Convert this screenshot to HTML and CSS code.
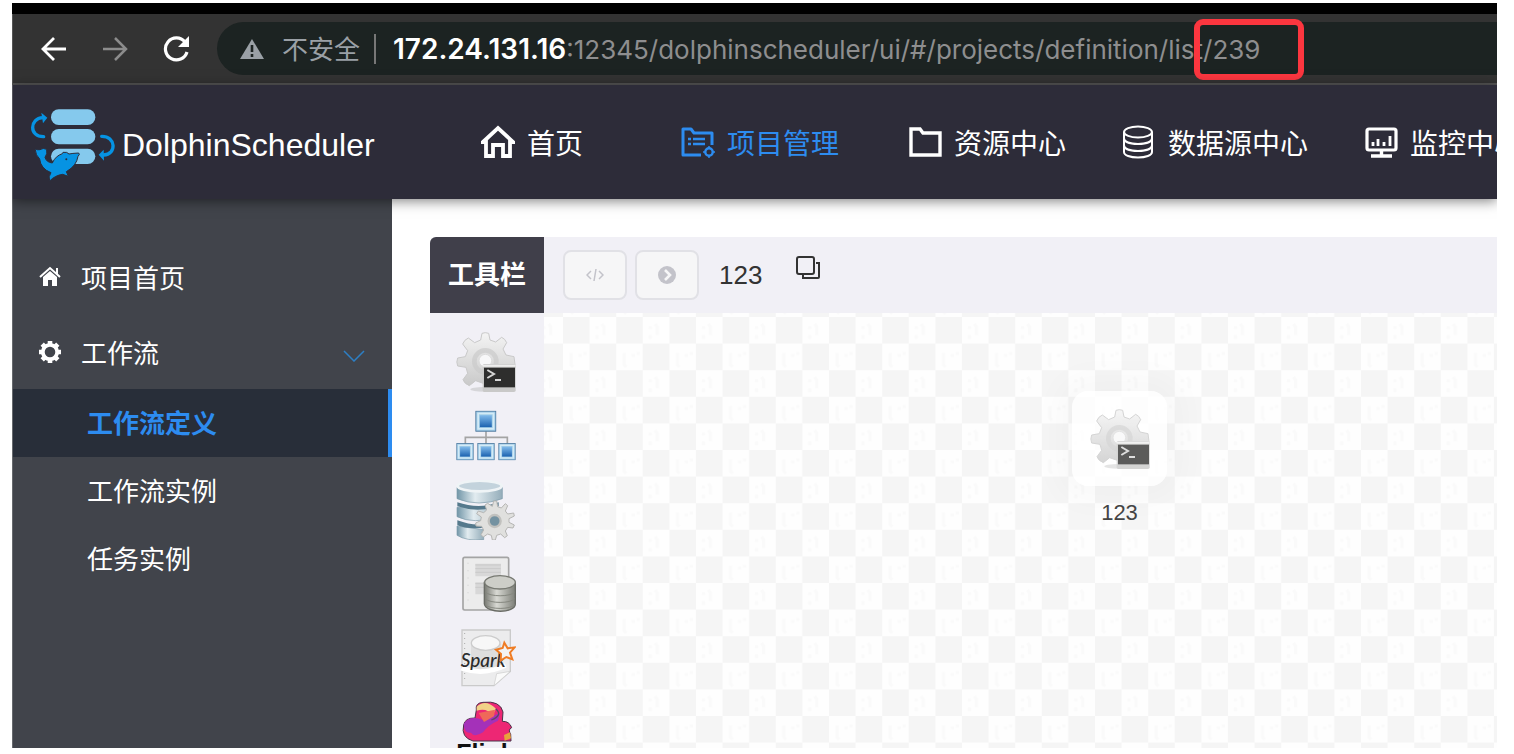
FILE: index.html
```html
<!DOCTYPE html>
<html lang="zh-CN">
<head>
<meta charset="utf-8">
<title>DolphinScheduler</title>
<link rel="stylesheet" href="styles.css">
</head>
<body>
<svg class="defs" aria-hidden="true">
  <defs>
    <linearGradient id="steel" x1="0" y1="0" x2="0" y2="1"><stop offset="0" stop-color="#f4f4f4"/><stop offset="1" stop-color="#c9c9c9"/></linearGradient>
    <linearGradient id="blue" x1="0" y1="0" x2="0" y2="1"><stop offset="0" stop-color="#7fb9ea"/><stop offset="1" stop-color="#1c62b0"/></linearGradient>
    <linearGradient id="disk" x1="0" y1="0" x2="1" y2="0"><stop offset="0" stop-color="#7296a8"/><stop offset=".4" stop-color="#e2ecf0"/><stop offset="1" stop-color="#94adba"/></linearGradient>
    <linearGradient id="can" x1="0" y1="0" x2="1" y2="0"><stop offset="0" stop-color="#777972"/><stop offset=".4" stop-color="#d8d9d3"/><stop offset="1" stop-color="#7d7f78"/></linearGradient>
    <symbol id="shell" viewBox="0 0 180 180">
      <ellipse cx="85" cy="172" rx="42" ry="7" fill="#bbb" opacity=".5"/>
      <path d="M74 24 78 4Q88 0 98 4L102 24 119 30 137 16Q147 20 152 32L141 51 150 69 174 74 178 105 150 112 141 130 100 160 76 152 59 146 40 161Q25 155 21 143L35 124 30 106 5 102Q0 90 5 78L28 74 35 56 20 36Q25 23 37 18L56 32Z" fill="url(#steel)" stroke="#c9c9c9" stroke-width="3"/>
      <circle cx="88" cy="88" r="33" fill="none" stroke="#cacaca" stroke-width="14" opacity=".7"/>
      <circle cx="88" cy="86" r="19" fill="#f8f8f9" stroke="#dcdcdc" stroke-width="3"/>
      <rect x="80" y="96" width="99" height="84" rx="5" fill="#c9c9c8"/>
      <path d="M80 101h99" stroke="#eee" stroke-width="6"/>
      <rect x="84" y="107" width="93" height="59" fill="#2e2e2d"/>
      <path d="m94 114 20 12-20 12M117 144h18" fill="none" stroke="#d6d6d6" stroke-width="6"/>
    </symbol>
    <symbol id="square" viewBox="0 0 60 60">
      <rect x="1" y="1" width="58" height="58" fill="#9fcbe6" stroke="#426e96" stroke-width="3"/>
      <rect x="8" y="8" width="44" height="44" fill="none" stroke="#d3eaf6" stroke-width="5"/>
      <rect x="13" y="13" width="34" height="34" fill="url(#blue)"/>
    </symbol>
  </defs>
</svg>
<div class="window">
  <div class="titlebar"></div>
  <div class="browser">
    <button class="chrome-btn" aria-label="后退"><svg viewBox="0 0 26 26"><path d="M25 13H2M13 2 2 13l11 11" fill="none" stroke="#fff" stroke-width="2.800"/></svg></button>
    <button class="chrome-btn" aria-label="前进"><svg viewBox="0 0 26 26"><path d="M1 13h23M13 2l11 11-11 11" fill="none" stroke="#8c8c8c" stroke-width="2.500"/></svg></button>
    <button class="chrome-btn" aria-label="重新加载"><svg viewBox="0 0 26 26"><path d="M22 6A11 11 0 1 0 24 16" fill="none" stroke="#fff" stroke-width="3.200"/><path d="M26 0v11H15z" fill="#fff"/></svg></button>
    <div class="address">
      <svg class="warn" viewBox="0 0 24 22"><path d="M12 1 24 21H0z" fill="#9aa0a6"/><path d="M12 7v7M12 16v3" stroke="#1c2322" stroke-width="2.600"/></svg>
      <span class="insecure">不安全</span>
      <span class="bar"></span>
      <span class="url"><b>172.24.131.16</b>:12345/dolphinscheduler/ui/#/projects/definition/list<span class="code">/239</span></span>
    </div>
  </div>
  <header class="nav">
    <a class="brand" href="#">
      <svg class="logo" viewBox="90 321 258 225">
        <g fill="#85c9ed"><rect x="153" y="328" width="133" height="47" rx="23"/><rect x="153" y="387" width="133" height="46" rx="23"/><rect x="153" y="446" width="133" height="46" rx="23"/></g>
        <g fill="none" stroke="#0693e3" stroke-width="10" stroke-linecap="round"><path d="M131 410C86 411 89 354 128 353"/><path d="M305 409C348 408 351 464 311 465"/></g>
        <path d="m124 338 18 15-13 17zM311 449l-15 15 16 18z" fill="#0693e3"/>
        <path d="M105 446q8 5 15 3 10-7 20-1 3 14-5 24 4 15 22 17 9-21 30-28l2-4q13-2 18 5 9-2 29-3 5 4-2 10-4 28-35 46l6 14-17-6q-23 3-39 20-5-13 4-25-31-12-34-41-12-10-14-31z" fill="#0693e3" stroke="#2d2c39" stroke-width="3"/>
        <circle cx="199" cy="478" r="3" fill="#2d2c39"/>
      </svg>
      <span>DolphinScheduler</span>
    </a>
    <nav class="menu">
      <a class="item home" href="#"><svg viewBox="0 0 34 34"><path d="M2 17 17 3l15 14h-3v14h-7V20H12v11H5V17z" fill="none" stroke="#fff" stroke-width="3.800"/></svg>首页</a>
      <a class="item project" href="#"><svg viewBox="0 0 34 34"><path d="M20 30H2V4h8l3 4h18v12" fill="none" stroke="#2d8cf0" stroke-width="3" stroke-linejoin="round"/><path d="M7 14h3m2 0h12M7 19h3m2 0h12" stroke="#2d8cf0" stroke-width="2.600"/><circle cx="28" cy="27" r="3.700" fill="none" stroke="#2d8cf0" stroke-width="2.400"/><path d="M28 21v3m0 6v3M22 27h2m8 0h2" stroke="#2d8cf0" stroke-width="1.500"/></svg>项目管理</a>
      <a class="item" href="#"><svg viewBox="0 0 34 34"><path d="M3 30V4h9l3 4h17v22z" fill="none" stroke="#fff" stroke-width="3.400"/></svg>资源中心</a>
      <a class="item" href="#"><svg viewBox="0 0 34 34"><g fill="none" stroke="#fff" stroke-width="2"><ellipse cx="16" cy="7" rx="14" ry="5.500"/><path d="M2 7v20c0 3.500 6.300 5.500 14 5.500s14-2 14-5.500V7M2 13c0 4 6.300 6 14 6s14-2 14-6M2 20c0 4 6.300 6 14 6s14-2 14-6"/></g></svg>数据源中心</a>
      <a class="item" href="#"><svg viewBox="0 0 34 34"><rect x="3" y="4" width="29" height="21" rx="2" fill="none" stroke="#fff" stroke-width="3.200"/><path d="M9 21v-4m5 4v-7m6 7v-4m6 4V11" stroke="#fff" stroke-width="2.800"/><path d="M17.500 25v5M7 31h21" stroke="#fff" stroke-width="3.400"/></svg>监控中心</a>
    </nav>
  </header>
  <div class="body">
    <aside class="side">
      <a class="row" href="#"><svg class="row-icon" viewBox="0 0 22 22"><path d="M4 11v9h5v-6h4v6h5v-9l-7-6z" fill="#fff"/><path d="m1 11 10-9 10 9M18 2v6" fill="none" stroke="#fff" stroke-width="2"/></svg>项目首页</a>
      <a class="row" href="#"><svg class="row-icon" viewBox="0 0 22 22"><circle cx="11" cy="11" r="7.200" fill="none" stroke="#fff" stroke-width="3.800"/><path d="M11 0v4m0 14v4M0 11h4m14 0h4M3.200 3.200 6 6m10 10 2.800 2.800m0-15.600L16 6M6 16l-2.800 2.800" stroke="#fff" stroke-width="4.600"/></svg>工作流<svg class="chevron" viewBox="0 0 22 12"><path d="m1 1 10 10L21 1" fill="none" stroke="#2d7fc4" stroke-width="1.500"/></svg></a>
      <a class="sub active" href="#">工作流定义</a>
      <a class="sub" href="#">工作流实例</a>
      <a class="sub" href="#">任务实例</a>
    </aside>
    <main class="main">
      <section class="dag">
        <div class="toolbar">
          <h2 class="tool-title">工具栏</h2>
          <button class="op" aria-label="查看变量"><svg viewBox="0 0 18 14"><path d="M5 3 1 7l4 4M13 3l4 4-4 4M10 1 8 13" fill="none" stroke="#c3c3ca" stroke-width="1.500"/></svg></button>
          <button class="op" aria-label="运行"><svg viewBox="0 0 18 18"><circle cx="9" cy="9" r="9" fill="#c3c3ca"/><path d="m7 4 5 5-5 5" fill="none" stroke="#f6f6f7" stroke-width="2.600"/></svg></button>
          <span class="dag-name">123</span>
          <button class="copy" aria-label="复制名称"><svg viewBox="0 0 24 24"><rect x="1" y="1" width="17" height="17" rx="2" fill="none" stroke="#333" stroke-width="2"/><path d="M20 7h3v14q0 1-1 1H7v-3" fill="none" stroke="#333" stroke-width="2"/></svg></button>
        </div>
        <div class="work">
          <div class="tools">
            <svg class="tool"><use href="#shell"/></svg>
            <svg class="tool" viewBox="0 0 180 180"><path d="M90 76v42M28 118V94h126v24" fill="none" stroke="#a4a4a4" stroke-width="5"/><use href="#square" x="58" y="14" width="63" height="63"/><use href="#square" x="1" y="111" width="52" height="52"/><use href="#square" x="64" y="111" width="52" height="52"/><use href="#square" x="127" y="111" width="52" height="52"/></svg>
            <svg class="tool" viewBox="0 0 180 180">
              <g fill="url(#disk)" stroke="#7c9aa9" stroke-width="2"><path d="M3 138v28q30 18 80 13v-30z"/><path d="M3 82v28q50 24 125 0V82z"/><path d="M3 22v34q65 26 136 0V22z"/></g>
              <path d="M4 67q65 22 124 0v12q-64 20-124 0zM4 121q55 20 90 8v12q-55 9-90-5z" fill="#55798c"/>
              <ellipse cx="71" cy="18" rx="66" ry="16" fill="#c3d3dc" stroke="#eff4f6" stroke-width="8"/>
              <path d="m109 79 4-16h9l3 17 11 4 12-13 7 6-7 16 7 9 18-3 2 9-16 8v11l16 8-4 9-16-2-7 11 6 14-8 6-12-11-12 4-4 14h-9l-3-14-11-4-13 9-7-7 8-14-6-11-17-1-1-9 15-7 2-11-14-10 5-8 16 5 9-8-5-15 8-5z" fill="#e0e0de" stroke="#b5b5b3" stroke-width="3"/>
              <circle cx="116" cy="123" r="18" fill="#7492a1" stroke="#c1c1be" stroke-width="7"/>
            </svg>
            <svg class="tool" viewBox="0 0 180 180"><rect x="21" y="10" width="137" height="158" rx="5" fill="#ececec" stroke="#a4a4a4" stroke-width="5"/><path d="M58 29h77v38H58zM58 85h77v36H58z" fill="#d8d8d8"/><path d="M58 33h76M58 44h76M58 55h76M58 89h76M58 100h76" stroke="#c9c9c9" stroke-width="3"/><path d="M36 26v128" stroke="#ccc" stroke-width="2" stroke-dasharray="4 18"/><path d="M85 85v65c5 29 93 29 93 0V85z" fill="url(#can)" stroke="#696b65" stroke-width="4"/><path d="M88 114c12 15 77 15 88 0M88 134c12 15 77 15 88 0M88 152c12 15 77 15 88 0" fill="none" stroke="#85877f" stroke-width="3"/><ellipse cx="132" cy="85" rx="46" ry="20" fill="#cdcec8" stroke="#777972" stroke-width="4"/></svg>
            <svg class="tool" viewBox="0 0 180 180"><path d="M18 6h145v124l-49 43H18z" fill="#ececed" stroke="#cacaca" stroke-width="4"/><path d="m163 130-49 43 8-36z" fill="#fafafa" stroke="#ccc" stroke-width="2"/><path d="M26 15v145" stroke="#aaa" stroke-width="3" stroke-dasharray="3 12"/><path d="M45 48v75q44 25 90 0V48z" fill="#dedede"/><ellipse cx="89" cy="45" rx="43" ry="22" fill="#f7f7f7" stroke="#ccc" stroke-width="4"/><path d="M16 121q68 23 133-9" fill="none" stroke="#fff" stroke-width="14"/><text class="spark" x="14" y="116">Spark</text><path d="m145 44 10 17 21-3-14 16 7 20-18-7-17 11 1-20-15-13 20-5z" fill="#f3f3f3" stroke="#ef7c24" stroke-width="6"/></svg>
            <svg class="tool flink-icon" viewBox="0 0 180 180"><path d="M61 24q-4-21 20-23 52-6 60 29l-2 28q21-1 28 19-12 5-3 20l1 20H51q-37-11-28-48 4-22 34-21z" fill="#ed2774" stroke="#493349" stroke-width="3"/><path d="M23 66q16-27 57-13l52-20-6 23q-30 13-45 35-26 17-36 1-20 4-22-26z" fill="#a431b9"/><path d="M62 14q27-25 58 6l-10 20q-16-23-48-14z" fill="#f1d287"/><path d="m68 33 49-10-3 20-30 17z" fill="#ef6859"/><path d="M119 20q23 19-13 34" fill="none" stroke="#5b4764" stroke-width="4"/><path d="m144 99 18-8 3 18-19 7z" fill="#e7a33b"/><text class="flink" x="1" y="180">Flink</text></svg>
          </div>
          <div class="canvas">
            <svg class="grid" aria-hidden="true"><defs><pattern id="checks" x="19" y="4" width="53.200" height="53.200" patternUnits="userSpaceOnUse"><rect width="53.200" height="53.200" fill="#fefefe"/><path d="M0 0h26.600v26.600H0zM26.600 26.600h26.600v26.600H26.600z" fill="#f5f5f5"/><path d="M34 9v3m0 6v4M39 7l2 3v8M8 36v12l2 2M17 37v3m5-5v3" fill="none" stroke="#fafafa" stroke-width="3"/></pattern></defs><rect width="100%" height="100%" fill="url(#checks)"/></svg>
            <div class="node"><div class="card"><svg class="node-icon"><use href="#shell"/></svg></div><span>123</span></div>
          </div>
        </div>
      </section>
    </main>
  </div>
</div>
</body>
</html>
```
FILE: styles.css
```css
* { box-sizing: border-box; }
body {
  margin: 0;
  padding: 3px 17px 6px 12px;
  background: #fff;
  font-family: "Liberation Sans", "Noto Sans CJK SC", sans-serif;
}
a { color: inherit; text-decoration: none; }
button { padding: 0; border: 0; background: none; }
svg { display: block; flex: none; }
.defs { position: absolute; width: 0; height: 0; }
.window {
  display: flex;
  flex-direction: column;
  height: calc(100vh - 9px);
  overflow: hidden;
}
.titlebar { flex: none; height: 11px; background: #000; }
.browser {
  display: flex;
  flex: none;
  align-items: center;
  height: 71px;
  padding-left: 28px;
  background: #333;
  border-left: 1px solid #555;
  border-bottom: 2px solid #555;
}
.chrome-btn { flex: none; width: 26px; height: 26px; margin-right: 35px; }
.chrome-btn svg { width: 26px; height: 26px; }
.chrome-btn:nth-child(3) { margin-right: 28px; }
.address {
  display: flex;
  flex: 1;
  align-items: center;
  height: 53px;
  min-width: 0;
  padding-left: 23px;
  border-radius: 27px 0 0 27px;
  background: #1c2322;
  color: #8e8e8f;
  white-space: nowrap;
}
.warn { width: 24px; height: 22px; margin-right: 18px; }
.insecure { padding-bottom: 2px; font-size: 26px; color: #9aa0a6; }
.bar { width: 2px; height: 30px; margin: 0 17px 0 14px; background: #777; }
.url { font-family: Inter, sans-serif; font-size: 26px; }
.url b { color: #fff; font-size: 28px; font-weight: 600; }
.code { position: relative; }
.code::after {
  content: "";
  position: absolute;
  inset: -15px -44px -15px -9px;
  border: 6px solid #fc363f;
  border-radius: 9px;
}
.nav {
  display: flex;
  position: relative;
  z-index: 1;
  flex: none;
  align-items: center;
  height: 114px;
  padding-left: 17px;
  border-left: 1px solid #55555c;
  background: #2d2c39;
  color: #fff;
  box-shadow: 0 2px 12px rgba(0, 0, 0, .5);
}
.brand { display: flex; flex: none; align-items: center; gap: 6px; width: 451px; padding-top: 5px; font-size: 32px; }
.brand span { padding-top: 2px; }
.logo { width: 86px; height: 75px; }
.menu { display: flex; flex: none; gap: 56px; }
.item { display: flex; flex: none; align-items: center; gap: 12px; font-size: 28px; }
.item svg { width: 34px; height: 34px; }
.home { min-width: 144px; }
.project { min-width: 171px; color: #2d8cf0; }
.body { display: flex; flex: 1; min-height: 0; }
.side {
  flex: none;
  width: 380px;
  padding-top: 40px;
  border-left: 1px solid #66696d;
  background: #41444b;
  color: #fff;
  font-size: 26px;
}
.row { display: flex; align-items: center; height: 75px; padding: 0 27px 0 26px; }
.row-icon { width: 22px; height: 22px; margin-right: 20px; }
.chevron { width: 22px; height: 12px; margin: 8px 0 0 auto; }
.sub { display: flex; align-items: center; height: 68px; padding: 0 0 3px 74px; }
.active { border-right: 4px solid #2d8cf0; background: #282e39; color: #2d8cf0; font-weight: 600; }
.main { display: flex; flex: 1; min-width: 0; padding: 38px 0 0 38px; background: #fff; }
.dag {
  display: flex;
  flex: 1;
  flex-direction: column;
  min-width: 0;
  overflow: hidden;
  border-radius: 6px 0 0 0;
  background: #f1f0f6;
}
.toolbar { display: flex; flex: none; align-items: center; height: 76px; color: #333; }
.tool-title {
  width: 114px;
  height: 76px;
  margin: 0 19px 0 0;
  background: #403f4a;
  color: #fff;
  font-size: 26px;
  font-weight: 600;
  line-height: 76px;
  text-align: center;
}
.op {
  display: grid;
  place-items: center;
  width: 64px;
  height: 50px;
  margin-right: 8px;
  border: 2px solid #e1e1e6;
  border-radius: 8px;
  background: #f6f6f7;
}
.op svg { width: 18px; height: 18px; }
.dag-name { margin: 0 34px 0 12px; font-size: 26px; }
.copy { height: 38px; }
.copy svg { width: 24px; height: 24px; margin-bottom: 14px; }
.work { display: flex; flex: 1; min-height: 0; }
.tools { display: flex; flex: none; flex-direction: column; align-items: center; gap: 14px; width: 114px; padding: 19px 3px 0 0; }
.tool { width: 60px; height: 60px; }
.flink-icon { overflow: visible; }
.spark { font: italic 500 57px Lato, sans-serif; fill: #2c2c2c; }
.flink { font: bold 75px "Liberation Sans", sans-serif; fill: #111; }
.canvas { position: relative; flex: 1; min-width: 0; overflow: hidden; }
.grid { width: 100%; height: 100%; }
.node {
  display: flex;
  position: absolute;
  top: 78px;
  left: 528px;
  flex-direction: column;
  align-items: center;
  gap: 14px;
  color: #444;
  font-size: 22px;
}
.card {
  display: grid;
  place-items: center;
  width: 95px;
  height: 95px;
  border-radius: 16px;
  background: rgba(255, 255, 255, .8);
  box-shadow: 0 0 30px 16px rgba(0, 0, 0, .025);
}
.node-icon { width: 60px; height: 60px; opacity: .78; }
```
